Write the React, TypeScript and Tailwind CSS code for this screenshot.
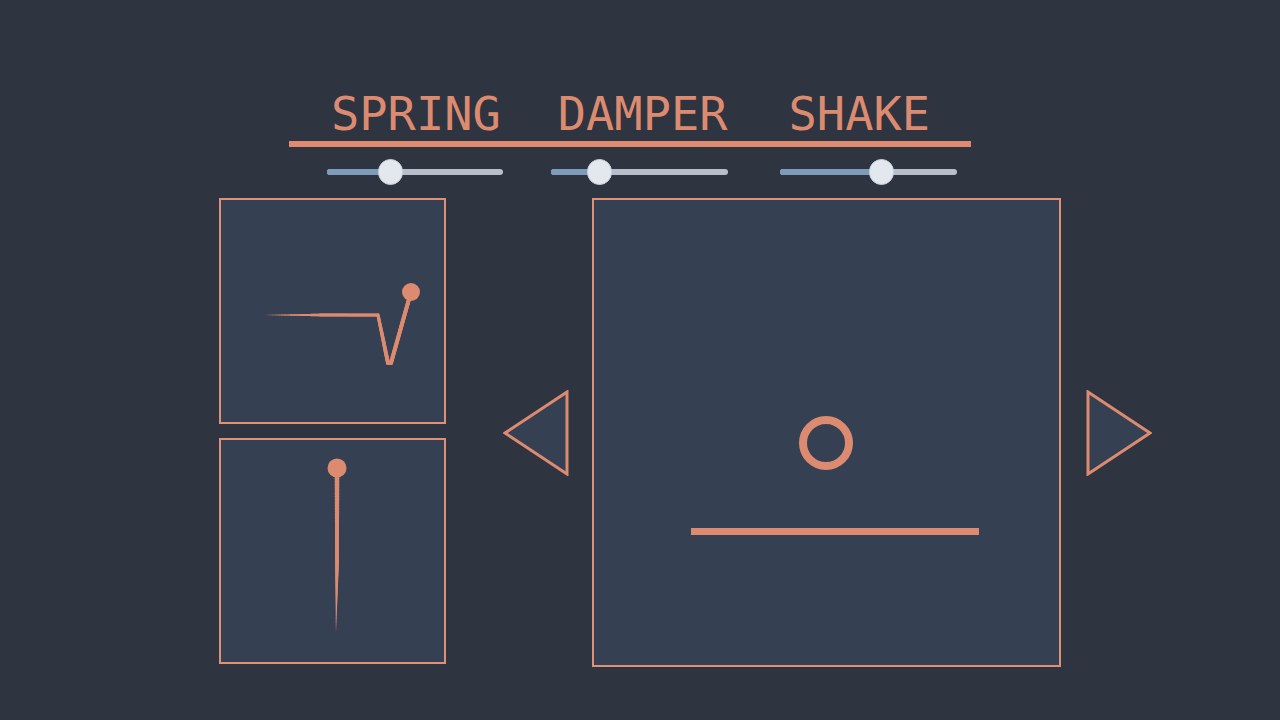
import React from "react";

type Pt = [number, number];

const ORANGE = "#dc8b70";
const PANEL = "#364053";

// Tapered stroke: the polyline is cut into short pieces whose width is
// interpolated between the widths given at each vertex.
function Trail({ pts, widths }: { pts: Pt[]; widths: number[] }) {
  const pieces: React.ReactElement[] = [];
  let k = 0;
  for (let i = 0; i < pts.length - 1; i++) {
    const [x0, y0] = pts[i];
    const [x1, y1] = pts[i + 1];
    const len = Math.hypot(x1 - x0, y1 - y0);
    const steps = Math.max(1, Math.ceil(len / 1.5));
    for (let s = 0; s < steps; s++) {
      const t0 = s / steps;
      const t1 = (s + 1) / steps;
      const w = widths[i] + (widths[i + 1] - widths[i]) * ((t0 + t1) / 2);
      if (w <= 0.05) continue;
      pieces.push(
        <line
          key={k++}
          x1={x0 + (x1 - x0) * t0}
          y1={y0 + (y1 - y0) * t0}
          x2={x0 + (x1 - x0) * t1}
          y2={y0 + (y1 - y0) * t1}
          stroke={ORANGE}
          strokeWidth={w}
          strokeLinecap="round"
        />
      );
    }
  }
  return <g>{pieces}</g>;
}

function Slider({ width, thumb }: { width: number; thumb: number }) {
  return (
    <div className="relative h-[26px] flex items-center" style={{ width }}>
      <div className="h-[6px] w-full rounded-full bg-[#b9bfca] overflow-hidden">
        <div className="h-full bg-[#7e9bb9]" style={{ width: thumb }} />
      </div>
      <div
        className="absolute top-0 h-[26px] w-[25px] rounded-full bg-[#e3e7ee] border border-[#c9cfd8]"
        style={{ left: thumb - 12 }}
      />
    </div>
  );
}

function Arrow({ dir }: { dir: "left" | "right" }) {
  const points = dir === "left" ? "2,43 64,2 64,84" : "2,2 2,84 64,43";
  return (
    <svg width="66" height="86" viewBox="0 0 66 86" className="self-center shrink-0">
      <polygon points={points} fill={PANEL} stroke={ORANGE} strokeWidth="3" strokeLinejoin="miter" />
    </svg>
  );
}

export default function App() {
  return (
    <div className="w-[1280px] h-[720px] bg-[#2e3440] flex flex-col pt-[90px] overflow-hidden">
      {/* tab labels */}
      <div className="ml-[289px] w-[682px] flex flex-col">
        <div
          className="flex pl-[42px] text-[47px] leading-[47px] text-[#dc8b70] whitespace-pre"
          style={{ fontFamily: '"DejaVu Sans Mono", monospace' }}
        >
          <span>SPRING</span>
          <span className="ml-[57px]">DAMPER</span>
          <span className="ml-[61px]">SHAKE</span>
        </div>
        <div className="mt-[4px] h-[6px] bg-[#df8a6e]" />
        <div className="mt-[12px] h-[26px] flex items-center pl-[38px]">
          <Slider width={176} thumb={63} />
          <div className="ml-[48px]">
            <Slider width={177} thumb={48} />
          </div>
          <div className="ml-[52px]">
            <Slider width={177} thumb={101} />
          </div>
        </div>
      </div>

      {/* views */}
      <div className="mt-[13px] ml-[219px] flex items-start">
        <div className="flex flex-col gap-[14px] shrink-0">
          <div className="w-[227px] h-[226px] border-2 border-[#df9178] bg-[#364053]">
            <svg width="223" height="222" viewBox="0 0 223 222">
              <Trail
                pts={[
                  [44, 115],
                  [100, 115],
                  [157, 115],
                  [167, 163],
                  [170, 163],
                  [190, 92],
                ]}
                widths={[0, 2.8, 3.2, 4, 4, 4]}
              />
              <circle cx="190" cy="92" r="9" fill={ORANGE} />
            </svg>
          </div>
          <div className="w-[227px] h-[226px] border-2 border-[#df9178] bg-[#364053]">
            <svg width="223" height="222" viewBox="0 0 223 222">
              <Trail
                pts={[
                  [116, 28],
                  [116, 125],
                  [115, 192],
                ]}
                widths={[4.5, 3.6, 0]}
              />
              <circle cx="116" cy="28" r="9.5" fill={ORANGE} />
            </svg>
          </div>
        </div>

        <div className="ml-[57px] self-stretch flex items-center">
          <Arrow dir="left" />
        </div>

        <div className="ml-[23px] w-[469px] h-[469px] border-2 border-[#df9178] bg-[#364053] shrink-0">
          <svg width="465" height="465" viewBox="0 0 465 465">
            <circle cx="232" cy="243" r="23" fill="none" stroke={ORANGE} strokeWidth="8" />
            <rect x="97" y="328" width="288" height="7" fill={ORANGE} />
          </svg>
        </div>

        <div className="ml-[25px] self-stretch flex items-center">
          <Arrow dir="right" />
        </div>
      </div>
    </div>
  );
}
